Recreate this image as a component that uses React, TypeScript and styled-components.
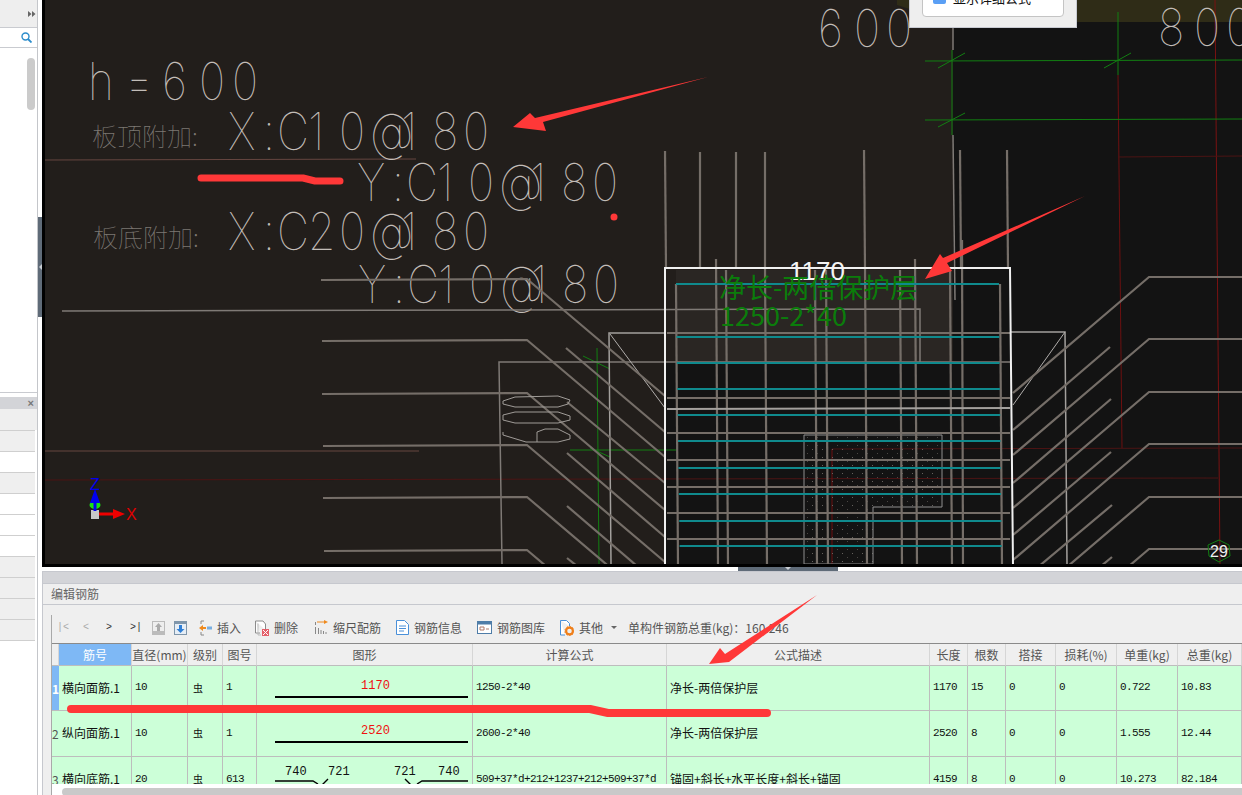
import React from "react";
import styled, { createGlobalStyle } from "styled-components";

const Global = createGlobalStyle`
  html, body { margin: 0; padding: 0; background: #fff; overflow: hidden; }
  body { font-family: "Noto Sans CJK SC", "Liberation Sans", sans-serif; }
`;

const Page = styled.div`
  position: relative;
  width: 1242px;
  height: 795px;
  overflow: hidden;
  display: flex;
  background: #fff;
`;

/* ---------- sidebar ---------- */
const Sidebar = styled.aside`
  width: 37px;
  flex: none;
  display: flex;
  flex-direction: column;
  border-right: 1px solid #c4c6ca;
  box-sizing: content-box;
`;
const SideTop = styled.div`
  height: 27px;
  background: #eeeeee;
  border-bottom: 1px solid #c9cbd0;
  display: flex;
  justify-content: flex-end;
  align-items: center;
  padding-right: 1px;
`;
const SideSearch = styled.div`
  height: 19px;
  border-bottom: 1px solid #c9cbd0;
  display: flex;
  justify-content: flex-end;
  align-items: center;
  padding-right: 5px;
`;
const SideList = styled.div`
  height: 345px;
  border-bottom: 1px solid #c9cbd0;
  display: flex;
  justify-content: flex-end;
  padding: 10px 2px 0 0;
  box-sizing: border-box;
`;
const Thumb = styled.div`
  width: 8px;
  height: 52px;
  border-radius: 4px;
  background: #cbcbcb;
`;
const SideHeader = styled.div`
  margin-top: 4px;
  height: 12px;
  background: #d3d4d8;
  display: flex;
  justify-content: flex-end;
  align-items: center;
  padding-right: 3px;
  color: #777;
  font: 700 11px "Liberation Sans", sans-serif;
`;
const SideSub = styled.div`
  height: 21px;
  background: #efefef;
`;
const SideRow = styled.div<{ $white?: boolean }>`
  height: 20px;
  width: 35px;
  border-top: 1px solid #cfcfcf;
  background: ${(p) => (p.$white ? "#fff" : "#efefef")};
  &:last-child { border-bottom: 1px solid #cfcfcf; }
`;

/* ---------- splitters ---------- */
const VSplit = styled.div`
  width: 4px;
  flex: none;
  padding-top: 217px;
  box-sizing: border-box;
`;
const VHandle = styled.div`
  height: 100px;
  background: #5f6b78;
  display: flex;
  align-items: center;
  justify-content: center;
  &::after {
    content: "";
    border: 3px solid transparent;
    border-left-width: 0;
    border-right: 3px solid #c8cdd3;
  }
`;
const Main = styled.main`
  flex: 1;
  min-width: 0;
  display: flex;
  flex-direction: column;
`;
const CanvasFrame = styled.section`
  position: relative;
  height: 564px;
  border-left: 3px solid #000;
  border-bottom: 3px solid #000;
  background: #131313;
  overflow: hidden;
  flex: none;
`;
const HSplit = styled.div`
  height: 4px;
  flex: none;
  padding-left: 696px;
`;
const HHandle = styled.div`
  width: 100px;
  height: 4px;
  background: #5f6b78;
  display: flex;
  justify-content: center;
  &::after {
    content: "";
    border: 3px solid transparent;
    border-bottom-width: 0;
    border-top: 3px solid #c8cdd3;
  }
`;

/* ---------- popup ---------- */
const Popup = styled.div`
  position: absolute;
  left: 864px;
  top: -14px;
  width: 168px;
  height: 42px;
  background: #eeeeee;
  border: 1px solid #c8cad2;
  box-sizing: border-box;
  padding: 0 12px;
`;
const PopupCard = styled.div`
  height: 30px;
  background: #fff;
  border: 1px solid #c4c4c4;
  border-radius: 0 0 4px 4px;
  display: flex;
  align-items: flex-start;
  gap: 7px;
  padding: 1px 10px 0;
  box-sizing: border-box;
  font-size: 13px;
  line-height: 18px;
  color: #111;
  white-space: nowrap;
  overflow: hidden;
`;
const PopupCheck = styled.span`
  width: 13px;
  height: 13px;
  margin-top: 2px;
  border-radius: 2px;
  background: #5a9ff5;
  flex: none;
`;

/* ---------- panel ---------- */
const Panel = styled.section`
  flex: 1;
  min-height: 0;
  display: flex;
  flex-direction: column;
  background: #efefef;
  border-left: 1px solid #c6c8ce;
`;
const PanelCap = styled.div`
  height: 11px;
  flex: none;
  background: #d3d4d8;
  border-top: 1px solid #c6c8ce;
  border-bottom: 1px solid #c6c8ce;
  box-sizing: content-box;
`;
const PanelTitle = styled.div`
  height: 18px;
  padding-bottom: 2px;
  flex: none;
  display: flex;
  align-items: center;
  padding-left: 8px;
  border-bottom: 1px solid #c6c8ce;
  font-size: 12px;
  color: #666;
`;
const Body = styled.div`
  flex: 1;
  min-height: 0;
  padding: 10px 0 0 8px;
  display: flex;
  flex-direction: column;
`;
const BodyInner = styled.div`
  flex: 1;
  min-height: 0;
  border-left: 1px solid #a9a9a9;
  display: flex;
  flex-direction: column;
`;
const Toolbar = styled.div`
  height: 25px;
  padding-bottom: 4px;
  flex: none;
  display: flex;
  align-items: center;
  padding-left: 5px;
  font-size: 12px;
  color: #555;
  white-space: nowrap;
`;
const NavBtn = styled.span<{ $w: number; $dim?: boolean }>`
  width: ${(p) => p.$w}px;
  flex: none;
  font: 10px "Liberation Mono", monospace;
  color: ${(p) => (p.$dim ? "#aaa" : "#333")};
`;
const ToolBtn = styled.span<{ $w: number }>`
  width: ${(p) => p.$w}px;
  flex: none;
  display: inline-flex;
  align-items: center;
  gap: 5px;
`;
const Gridbox = styled.div`
  height: 140px;
  flex: none;
  overflow: hidden;
  display: grid;
  grid-template-columns: 7px 73px 56px 35px 34px 216px 194px 263px 38px 38px 50px 61px 61px 64px;
  grid-template-rows: 22px 45px 46px 46px;
  border-top: 1px solid #8a8a8a;
  margin-top: -1px;
  background: #ccffd8;
`;
const Head = styled.div<{ $active?: boolean }>`
  background: ${(p) => (p.$active ? "#7eb8f5" : "#efefef")};
  color: ${(p) => (p.$active ? "#fff" : "#555")};
  border-right: 1px solid #d6d6d6;
  border-bottom: 1px solid #bdbdbd;
  display: flex;
  align-items: center;
  justify-content: center;
  font-size: 12px;
  white-space: nowrap;
  box-sizing: border-box;
`;
const RowNo = styled.div<{ $active?: boolean }>`
  background: ${(p) => (p.$active ? "#7eb8f5" : "#ccffd8")};
  color: ${(p) => (p.$active ? "#fff" : "#555")};
  font-weight: ${(p) => (p.$active ? 700 : 400)};
  font-size: 12px;
  display: flex;
  align-items: center;
  border-bottom: 1px solid #bdbdbd;
  box-sizing: border-box;
  overflow: hidden;
`;
const Cell = styled.div<{ $mono?: boolean }>`
  border-right: 1px solid #bdbdbd;
  border-bottom: 1px solid #bdbdbd;
  box-sizing: border-box;
  padding: 0 0 2px 3px;
  display: flex;
  align-items: center;
  white-space: nowrap;
  overflow: hidden;
  color: #111;
  font: ${(p) =>
    p.$mono
      ? `11px "Liberation Mono", monospace`
      : `12px "Noto Sans CJK SC", sans-serif`};
  letter-spacing: ${(p) => (p.$mono ? "-0.6px" : "0")};
`;
const SymbolCell = styled(Cell)`
  font-size: 10px;
  padding-left: 5px;
`;
const ShapeCell = styled.div`
  border-right: 1px solid #bdbdbd;
  border-bottom: 1px solid #bdbdbd;
  box-sizing: border-box;
  padding: 13px 4px 0 18px;
  display: flex;
  flex-direction: column;
  align-items: center;
  gap: 3px;
`;
const ShapeLabel = styled.span`
  font: 12px/14px "Liberation Mono", monospace;
  color: #f01010;
  margin-left: 8px;
`;
const ShapeBar = styled.span`
  width: 100%;
  height: 2px;
  background: #000;
`;
const Drawing3 = styled.div`
  border-right: 1px solid #bdbdbd;
  border-bottom: 1px solid #bdbdbd;
  box-sizing: border-box;
`;
const ScrollGap = styled.div`
  height: 4px;
  flex: none;
  background: #fff;
`;
const ScrollTrack = styled.div`
  height: 8px;
  flex: none;
  padding-left: 10px;
  background: #fff;
`;
const ScrollThumb = styled.div`
  height: 8px;
  border-radius: 4px 0 0 4px;
  background: #c9c9c9;
`;

/* ---------- drawing ---------- */
const CadSvg = styled.svg`
  display: block;
  width: 1197px;
  height: 564px;
`;
const CadType = styled.text`
  font-family: "Inter", "Liberation Sans", sans-serif;
  font-weight: 100;
  font-size: 52px;
  fill: #c2bdb8;
`;
const CadCjk = styled.text`
  font-family: "Noto Sans CJK SC", sans-serif;
  font-weight: 100;
  font-size: 25px;
  fill: #7d7873;
`;
const GreenNote = styled.text`
  font-family: "Noto Sans CJK SC", "Liberation Sans", sans-serif;
  font-size: 27px;
  fill: #0b7d0b;
`;
const WhiteDim = styled.text`
  font-family: "Liberation Sans", sans-serif;
  font-size: 26px;
  fill: #f4f4f4;
`;
const Small = styled.text<{ $c: string }>`
  font-family: "Liberation Sans", sans-serif;
  font-size: 16px;
  fill: ${(p) => p.$c};
`;
const Overlay = styled.svg`
  position: absolute;
  left: 0;
  top: 0;
  width: 1242px;
  height: 795px;
  pointer-events: none;
`;

const SX = 0.85;
const Cad: React.FC<{ x: number; y: number; t: string; at: number[] }> = ({ x, y, t, at }) => (
  <CadType transform={`translate(${x} ${y}) scale(${SX} 1)`} x={at.map((n) => n / SX).join(" ")}>
    {t}
  </CadType>
);
const REBAR = [0, 35, 49, 80, 111, 142, 173, 204, 235];

type L = [number, number, number, number];
const W = "#756e68";
const mainLeft: [number, number][] = [
  [321, 280],
  [322, 341],
  [322, 394],
  [323, 446],
  [323, 498],
  [324, 551],
];
const shortLeft: L[] = [
  [566, 348, 665, 432],
  [567, 402, 665, 483],
  [567, 453, 665, 537],
  [567, 506, 665, 590],
  [567, 558, 577, 566],
];
const mainRight = [277, 339, 392, 444, 497, 549];
const shortRight: L[] = [
  [1110, 347, 1013, 430],
  [1111, 399, 1013, 483],
  [1111, 452, 1013, 535],
  [1112, 505, 1013, 588],
  [1112, 557, 1100, 567],
];
const verticals: L[] = [
  [665, 151, 666, 268],
  [700, 152, 700, 268],
  [736, 152, 736, 268],
  [765, 152, 765, 268],
  [864, 150, 865, 268],
  [960, 150, 961, 268],
  [1007, 150, 1008, 268],
  [716, 259, 718, 566],
  [726, 270, 728, 566],
  [765, 268, 767, 566],
  [815, 270, 817, 566],
  [826, 270, 828, 566],
  [865, 268, 867, 566],
  [900, 270, 902, 566],
  [915, 259, 917, 566],
  [950, 270, 952, 566],
  [962, 240, 963, 566],
  [676, 284, 678, 566],
  [1000, 284, 1002, 566],
];
const hBars = [333, 398, 433, 460, 487, 513, 539];
const teal = [284, 337, 363, 389, 415, 441, 468, 494, 521, 546];
const sideWhite = [false, true, false, true, true, true, false, false, false, false];

const Drawing = () => (
  <CadSvg viewBox="45 0 1197 564">
    <defs>
      <pattern id="dots" width="10" height="8" patternUnits="userSpaceOnUse">
        <rect x="2" y="1" width="1" height="1" fill="#66625e" />
        <rect x="7" y="5" width="1" height="1" fill="#4a4744" />
      </pattern>
    </defs>
    <rect x="45" y="0" width="1197" height="564" fill="#131313" />
    <rect x="45" y="0" width="908" height="362" fill="#221e1b" />
    <rect x="45" y="362" width="620" height="202" fill="#221e1b" />
    <rect x="676" y="270" width="276" height="92" fill="#2a2623" />
    <polygon points="897,0 1242,0 1242,22 950,22 897,5" fill="#2f2c17" />

    {/* dark red guides */}
    <g stroke="#6d1010" fill="none">
      <line x1="1215" y1="0" x2="1220" y2="564" stroke="#7a1212" />
      <line x1="1118" y1="75" x2="1122" y2="448" />
      <line x1="1118" y1="157" x2="1242" y2="156" stroke="#4c1414" />
      <line x1="832" y1="449" x2="1242" y2="448" stroke="#4c1414" />
      <line x1="45" y1="480" x2="1218" y2="478" stroke="#4c1414" />
      <line x1="832" y1="449" x2="832" y2="564" />
      <line x1="45" y1="160" x2="416" y2="159" stroke="#664640" />
      <line x1="45" y1="451" x2="419" y2="451" stroke="#664640" />
    </g>

    {/* text in the drawing */}
    <Cad x={88} y={100} t="h=600" at={[0, 37, 74, 111, 144]} />
    <Cad x={228} y={150} t="X:C10@180" at={REBAR} />
    <Cad x={357} y={201} t="Y:C10@180" at={REBAR} />
    <Cad x={228} y={250} t="X:C20@180" at={REBAR} />
    <Cad x={358} y={303} t="Y:C10@180" at={REBAR} />
    <Cad x={818} y={47} t="600" at={[0, 36, 68]} />
    <Cad x={1158} y={46} t="800" at={[0, 36, 68]} />
    <CadCjk x={92} y={146}>板顶附加:</CadCjk>
    <CadCjk x={93} y={247}>板底附加:</CadCjk>

    {/* green axes */}
    <g stroke="#127f12" fill="none">
      <line x1="925" y1="61" x2="1242" y2="60" />
      <line x1="925" y1="120" x2="1242" y2="119" />
      <line x1="952" y1="50" x2="952" y2="135" />
      <line x1="1118" y1="12" x2="1118" y2="75" />
      <line x1="938" y1="68" x2="965" y2="53" />
      <line x1="938" y1="127" x2="965" y2="113" />
      <line x1="1104" y1="68" x2="1131" y2="53" />
      <line x1="597" y1="348" x2="599" y2="564" />
      <line x1="570" y1="450" x2="677" y2="450" />
      <line x1="583" y1="356" x2="610" y2="369" />
      <line x1="590" y1="448" x2="610" y2="457" />
    </g>

    {/* dotted block */}
    <path d="M804 435H942V507H873V564H804Z" fill="url(#dots)" stroke="#8f8f8f" />

    {/* boxes */}
    <g stroke="#7f7a76" fill="none" strokeWidth="1.5">
      <polyline points="62,311 920,309 920,362" />
      <polyline points="502,564 499,362 1010,362" />
      <polyline points="611,564 609,333 665,333" stroke="#a3a09d" />
      <polyline points="1010,332 1065,332 1067,564" stroke="#a3a09d" />
      <line x1="953" y1="28" x2="953" y2="50" />
      <line x1="953" y1="135" x2="955" y2="300" />
    </g>
    <line x1="610" y1="334" x2="665" y2="408" stroke="#b0adab" />
    <line x1="1065" y1="332" x2="1013" y2="405" stroke="#b0adab" />

    {/* reinforcement */}
    <g stroke={W} strokeWidth="2.2" fill="none">
      {mainLeft.map(([x, y]) => (
        <polyline key={y} points={`${x},${y} 527,${y - 1} 665,${y + 116}`} />
      ))}
      {shortLeft.map((l) => (
        <line key={l[1]} x1={l[0]} y1={l[1]} x2={l[2]} y2={l[3]} />
      ))}
      {mainRight.map((y) => (
        <polyline key={y} points={`1242,${y} 1149,${y} 1013,${y + 116}`} />
      ))}
      {shortRight.map((l) => (
        <line key={l[1]} x1={l[0]} y1={l[1]} x2={l[2]} y2={l[3]} />
      ))}
      {verticals.map((l) => (
        <line key={`${l[0]}-${l[1]}`} x1={l[0]} y1={l[1]} x2={l[2]} y2={l[3]} />
      ))}
      {hBars.map((y) => (
        <line key={y} x1="667" y1={y} x2="1010" y2={y} />
      ))}
    </g>

    {/* small outlines */}
    <g stroke="#a09c98" fill="none">
      <polygon points="503,401 515,397 558,396 570,400 568,404 558,407 515,407 503,404" />
      <polygon points="503,415 515,412 558,412 570,416 570,420 558,423 515,423 503,420" />
      <polyline points="503,432 503,435 526,442 558,442 570,439 570,435 558,429 545,429 537,432 537,442" />
    </g>

    <line x1="667" y1="409" x2="1010" y2="408" stroke="#a3a09d" strokeWidth="2" />
    <g stroke="#0f8a8d" strokeWidth="2">
      {teal.map((y, i) => (
        <line key={y} x1={676 + i * 0.4} y1={y} x2={999 + i * 0.3} y2={y} />
      ))}
    </g>
    <polyline points="665,566 665,268 1010,268 1013,566" fill="none" stroke="#f0f0f0" strokeWidth="2" />

    <WhiteDim x={789} y={280}>1170</WhiteDim>
    <GreenNote x={719} y={298}>净长-两倍保护层</GreenNote>
    <GreenNote x={720} y={326}>1250-2*40</GreenNote>

    {/* axis gizmo */}
    <rect x="91" y="510" width="8" height="9" fill="#c8c8c8" />
    <ellipse cx="95" cy="505" rx="5.5" ry="4" fill="#16e016" />
    <path d="M93.5 511V503H90L95 489L100 503H96.5V511Z" fill="#0000f0" />
    <path d="M99 512.5H113V509L125 514L113 519V515.5H99Z" fill="#f00000" />
    <Small $c="#0000f0" x={90} y={490}>Z</Small>
    <Small $c="#e00000" x={126} y={520}>X</Small>

    {/* view counter */}
    <polygon points="1219,540 1229,545 1230,556 1219,562 1209,556 1208,545" fill="none" stroke="#128012" />
    <Small $c="#f0f0f0" x={1210} y={557}>29</Small>
  </CadSvg>
);

const Up = () => (
  <svg width="13" height="14" viewBox="0 0 13 14">
    <rect width="13" height="14" fill="#bbb" />
    <rect x="1" y="1" width="11" height="9" fill="#eee" />
    <path d="M6.5 2L10 6H8V10H5V6H3Z" fill="#aaa" />
  </svg>
);
const Down = () => (
  <svg width="13" height="14" viewBox="0 0 13 14">
    <rect width="13" height="14" fill="#7f96ab" />
    <rect x="1" y="3" width="11" height="10" fill="#e6eef6" />
    <path d="M5 4H8V8H10.5L6.5 12L2.5 8H5Z" fill="#2f7fd6" />
  </svg>
);
const Insert = () => (
  <svg width="13" height="16" viewBox="0 0 13 16">
    <path d="M2 1H5M2 15H5M2 1V4M2 12V15" stroke="#888" fill="none" />
    <path d="M0 8L4 5V7H7V9H4V11Z" fill="#ef8a1e" />
    <rect x="8" y="6.5" width="5" height="3" fill="#78aee0" />
  </svg>
);
const Remove = () => (
  <svg width="14" height="16" viewBox="0 0 14 16">
    <path d="M.5 1H8L10.5 4V10M.5 1V13H5" stroke="#8b8b8b" fill="#fff" />
    <path d="M3 3.5V15H6" stroke="#bbb" fill="none" />
    <rect x="7" y="9" width="7" height="7" fill="#e4606a" />
    <path d="M8 10L13 15M13 10L8 15" stroke="#fff" />
  </svg>
);
const Scale = () => (
  <svg width="13" height="15" viewBox="0 0 13 15">
    <path d="M.5 2V5M.5 7V14M3.5 8V14M6 10V14M8.5 11V14M11 12V14" stroke="#888" />
    <path d="M2 2H9" stroke="#ef8a1e" />
    <path d="M9 0L13 2L9 4Z" fill="#ef8a1e" />
  </svg>
);
const Doc = () => (
  <svg width="13" height="15" viewBox="0 0 13 15">
    <path d="M.5.5H8.5L12.5 4.5V14.5H.5Z" fill="#fff" stroke="#4a90d9" />
    <path d="M3 6H10M3 8.5H10M3 11H8" stroke="#4a90d9" />
  </svg>
);
const Library = () => (
  <svg width="15" height="13" viewBox="0 0 15 13">
    <rect x=".5" y=".5" width="14" height="12" fill="#fff" stroke="#4f7da8" />
    <rect x="1" y="1" width="13" height="2.5" fill="#4f7da8" />
    <path d="M3 6H7V9H3ZM9 8H12" stroke="#b07a6a" fill="none" />
  </svg>
);
const Other = () => (
  <svg width="14" height="16" viewBox="0 0 14 16">
    <path d="M.5.5H6.5L9.5 3.5V6M.5.5V15H5" stroke="#4a90d9" fill="#fff" />
    <circle cx="9.5" cy="11" r="3.4" fill="none" stroke="#ef7f1a" strokeWidth="2.2" />
    <circle cx="9.5" cy="11" r="4.6" fill="none" stroke="#ef7f1a" strokeWidth="1" strokeDasharray="1.5 1.5" />
  </svg>
);
const Search = () => (
  <svg width="11" height="11" viewBox="0 0 11 11">
    <circle cx="4.5" cy="4.5" r="3.5" fill="none" stroke="#2b8ccb" strokeWidth="1.4" />
    <path d="M7 7L10.5 10.5" stroke="#2b8ccb" strokeWidth="1.8" />
  </svg>
);
const Caret = styled.span`
  border: 3px solid transparent;
  border-top: 3px solid #666;
  border-bottom-width: 0;
  margin-left: 3px;
`;

const heads = ["筋号", "直径(mm)", "级别", "图号", "图形", "计算公式", "公式描述", "长度", "根数", "搭接", "损耗(%)", "单重(kg)", "总重(kg)"];

const Rest: React.FC<{ v: string[] }> = ({ v }) => (
  <>
    {v.map((t, i) => (
      <Cell key={i} $mono>
        {t}
      </Cell>
    ))}
  </>
);

export default function App() {
  return (
    <Page>
      <Global />
      <Sidebar>
        <SideTop>
          <svg width="8" height="6" viewBox="0 0 8 6">
            <path d="M0 0L3.5 3L0 6ZM4 0L7.5 3L4 6Z" fill="#666" />
          </svg>
        </SideTop>
        <SideSearch>
          <Search />
        </SideSearch>
        <SideList>
          <Thumb />
        </SideList>
        <SideHeader>×</SideHeader>
        <SideSub />
        {sideWhite.map((w, i) => (
          <SideRow key={i} $white={w} />
        ))}
      </Sidebar>
      <VSplit>
        <VHandle />
      </VSplit>
      <Main>
        <CanvasFrame>
          <Drawing />
          <Popup>
            <PopupCard>
              <PopupCheck />
              显示详细公式
            </PopupCard>
          </Popup>
        </CanvasFrame>
        <HSplit>
          <HHandle />
        </HSplit>
        <Panel>
          <PanelCap />
          <PanelTitle>编辑钢筋</PanelTitle>
          <Body>
            <BodyInner>
              <Toolbar>
                <NavBtn $w={26} $dim>|&lt;</NavBtn>
                <NavBtn $w={23} $dim>&lt;</NavBtn>
                <NavBtn $w={24}>&gt;</NavBtn>
                <NavBtn $w={22}>&gt;|</NavBtn>
                <ToolBtn $w={22}><Up /></ToolBtn>
                <ToolBtn $w={25}><Down /></ToolBtn>
                <ToolBtn $w={56}><Insert />插入</ToolBtn>
                <ToolBtn $w={60}><Remove />删除</ToolBtn>
                <ToolBtn $w={81}><Scale />缩尺配筋</ToolBtn>
                <ToolBtn $w={81}><Doc />钢筋信息</ToolBtn>
                <ToolBtn $w={83}><Library />钢筋图库</ToolBtn>
                <ToolBtn $w={68}><Other />其他<Caret /></ToolBtn>
                单构件钢筋总重(kg)：160.246
              </Toolbar>
              <Gridbox>
                <Head />
                {heads.map((h, i) => (
                  <Head key={h} $active={i === 0}>
                    {h}
                  </Head>
                ))}

                <RowNo $active>1</RowNo>
                <Cell>横向面筋.1</Cell>
                <Cell $mono>10</Cell>
                <SymbolCell>虫</SymbolCell>
                <Cell $mono>1</Cell>
                <ShapeCell>
                  <ShapeLabel>1170</ShapeLabel>
                  <ShapeBar />
                </ShapeCell>
                <Cell $mono>1250-2*40</Cell>
                <Cell>净长-两倍保护层</Cell>
                <Rest v={["1170", "15", "0", "0", "0.722", "10.83"]} />

                <RowNo>2</RowNo>
                <Cell>纵向面筋.1</Cell>
                <Cell $mono>10</Cell>
                <SymbolCell>虫</SymbolCell>
                <Cell $mono>1</Cell>
                <ShapeCell>
                  <ShapeLabel>2520</ShapeLabel>
                  <ShapeBar />
                </ShapeCell>
                <Cell $mono>2600-2*40</Cell>
                <Cell>净长-两倍保护层</Cell>
                <Rest v={["2520", "8", "0", "0", "1.555", "12.44"]} />

                <RowNo>3</RowNo>
                <Cell>横向底筋.1</Cell>
                <Cell $mono>20</Cell>
                <SymbolCell>虫</SymbolCell>
                <Cell $mono>613</Cell>
                <Drawing3>
                  <svg width="215" height="45" viewBox="0 0 215 45">
                    <g fontFamily="Liberation Mono" fontSize="12" fill="#111">
                      <text x="28" y="18">740</text>
                      <text x="71" y="18">721</text>
                      <text x="137" y="18">721</text>
                      <text x="181" y="18">740</text>
                    </g>
                    <path d="M18 24H56L61 27M65 28L71 22M148 22L154 28M160 27L165 24H211" fill="none" stroke="#000" strokeWidth="1.4" />
                  </svg>
                </Drawing3>
                <Cell $mono>509+37*d+212+1237+212+509+37*d</Cell>
                <Cell>锚固+斜长+水平长度+斜长+锚固</Cell>
                <Rest v={["4159", "8", "0", "0", "10.273", "82.184"]} />
              </Gridbox>
              <ScrollGap />
              <ScrollTrack>
                <ScrollThumb />
              </ScrollTrack>
            </BodyInner>
          </Body>
        </Panel>
      </Main>
      <Overlay viewBox="0 0 1242 795">
        <g fill="#ff3838">
          <polygon points="708,77 543,122 546,131 513,127 530,113 535,118" />
          <polygon points="1085,196 947,263 952,271 925,279 940,254 943,258" />
          <polygon points="817,595 729,662 709,664 720,648 725,654" />
          <circle cx="614" cy="217" r="3.5" />
        </g>
        <g fill="none" stroke="#ff3838" strokeLinecap="round" strokeLinejoin="round">
          <path d="M201 178H303L315 181H340" strokeWidth="7" />
          <path d="M71 709H590L608 713H767" strokeWidth="8" />
        </g>
      </Overlay>
    </Page>
  );
}
